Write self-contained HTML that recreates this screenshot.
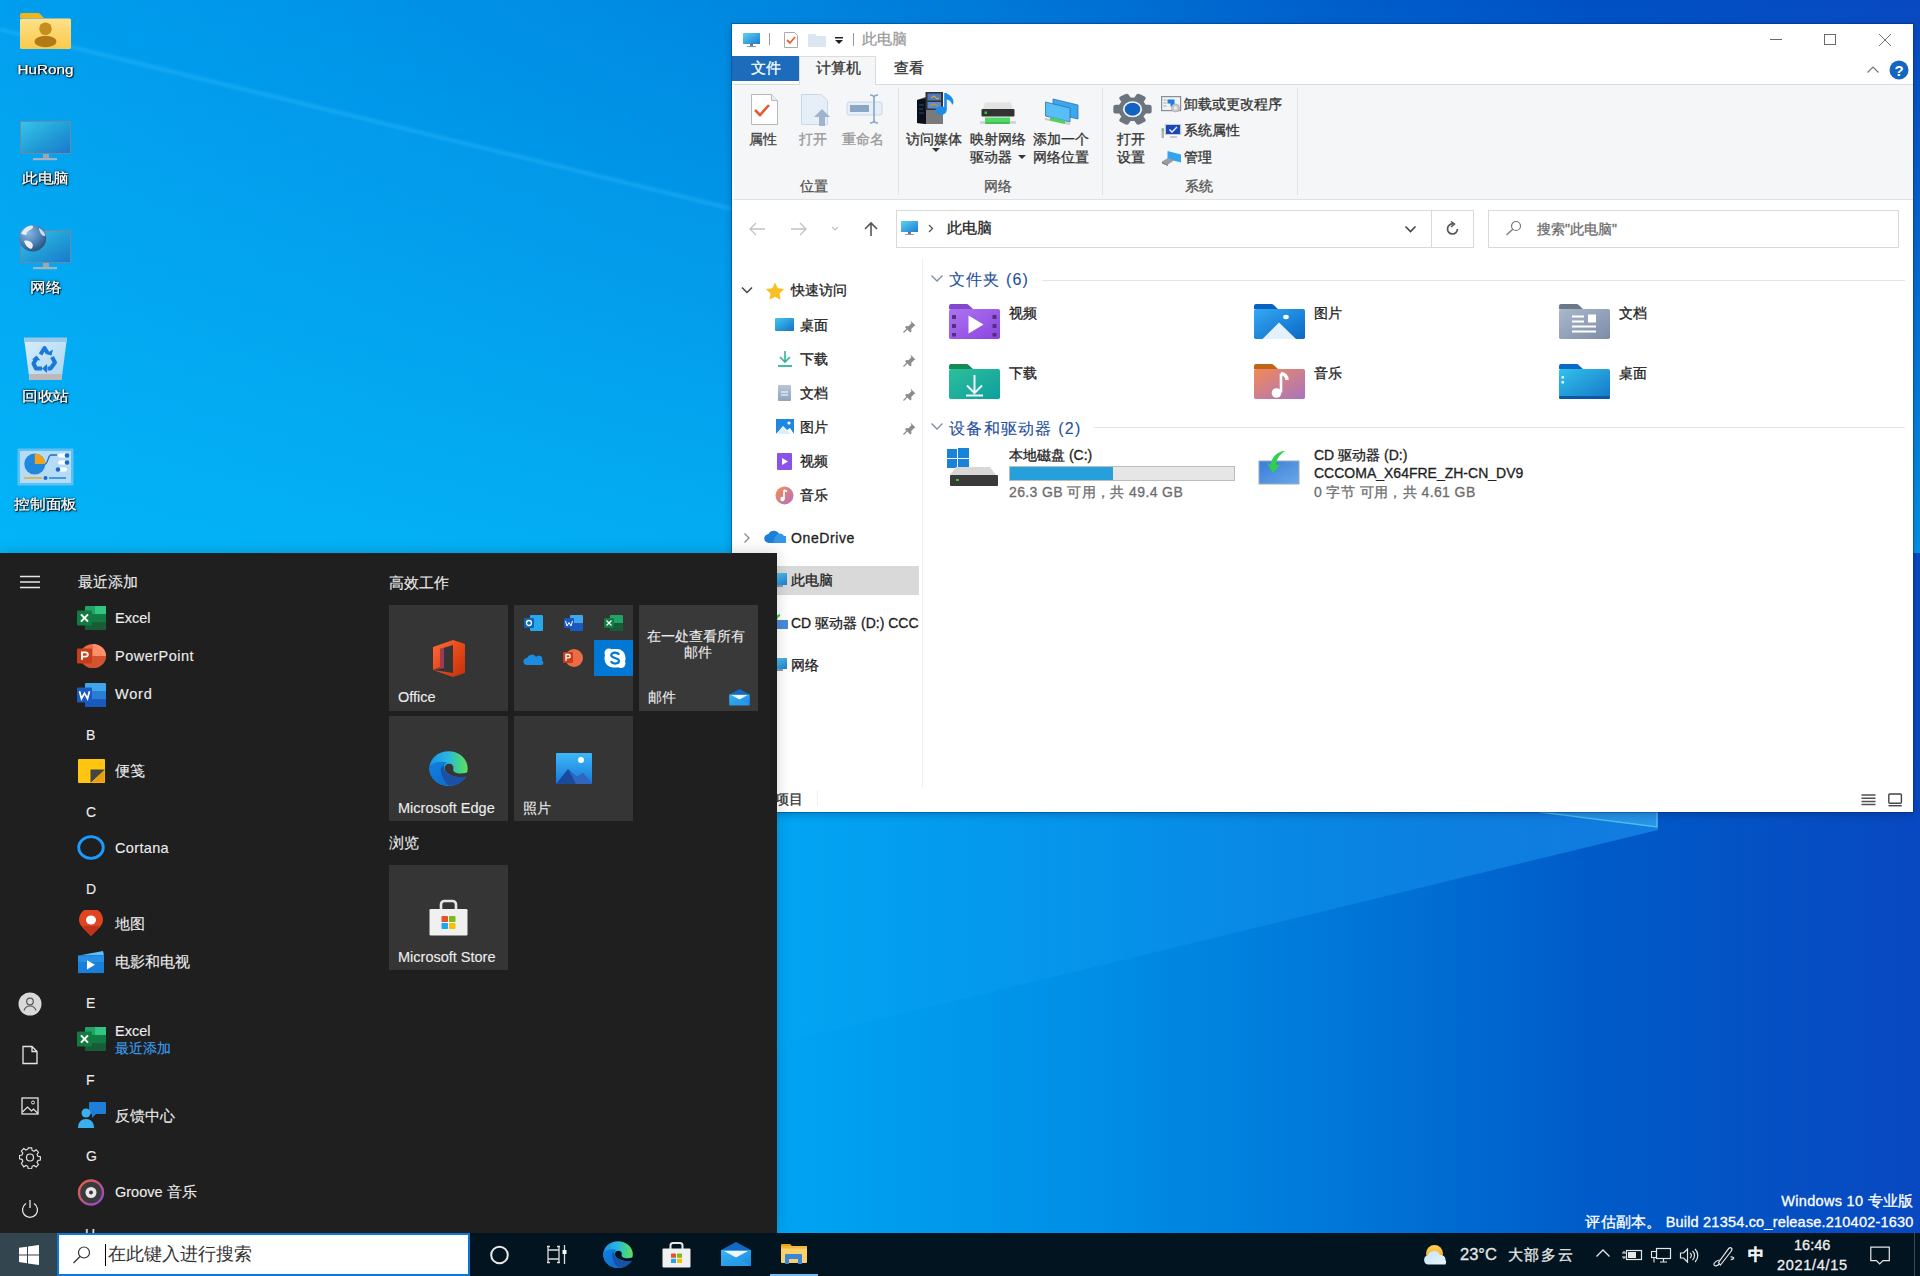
<!DOCTYPE html>
<html><head><meta charset="utf-8">
<style>
*{margin:0;padding:0;box-sizing:border-box}
html,body{width:1920px;height:1276px;overflow:hidden}
body{position:relative;font-family:"Liberation Sans",sans-serif;background:#0a8fe6;}
.a{position:absolute}
.t{position:absolute;white-space:nowrap;line-height:1;-webkit-text-stroke:0.3px currentColor}
svg{display:block}
/* desktop */
.dl{position:absolute;color:#fff;font-size:13.6px;text-shadow:1px 1px 1px #000,0 0 2px #000,0 0 3px rgba(0,0,0,.7);text-align:center;width:91px;left:0;line-height:1;transform:scaleX(1.12);-webkit-text-stroke:0.25px #fff}
/* explorer */
#win{left:732px;top:24px;width:1181px;height:788px;background:#fff;box-shadow:0 0 0 1px rgba(0,40,100,.35),0 2px 8px rgba(0,0,40,.25)}
.gray{color:#222}
/* start */
#start{left:0;top:553px;width:777px;height:680px;background:#1f1f1f;box-shadow:0 0 14px rgba(0,0,0,.18)}
.sm{color:#ededed;font-size:14.5px;-webkit-text-stroke:0.12px currentColor}
.tile{position:absolute;background:#353535}
/* taskbar */
#tb{left:0;top:1233px;width:1920px;height:43px;background:#021420}
</style></head><body>
<!-- WALLPAPER -->
<svg class="a" style="left:0;top:0" width="1920" height="1276" viewBox="0 0 1920 1276">
<defs>
<linearGradient id="gt" gradientUnits="userSpaceOnUse" x1="0" y1="0" x2="1920" y2="0">
<stop offset="0" stop-color="#009eee"/>
<stop offset="0.38" stop-color="#0088e0"/>
<stop offset="0.52" stop-color="#0078d8"/>
<stop offset="0.68" stop-color="#0060cc"/>
<stop offset="0.83" stop-color="#0050c4"/>
<stop offset="1" stop-color="#0848c0"/>
</linearGradient>
<linearGradient id="gtv" gradientUnits="userSpaceOnUse" x1="0" y1="0" x2="0" y2="553">
<stop offset="0" stop-color="#00c0ff" stop-opacity="0"/>
<stop offset="1" stop-color="#00c4ff" stop-opacity="0.6"/>
</linearGradient>
<linearGradient id="gb" gradientUnits="userSpaceOnUse" x1="777" y1="0" x2="1920" y2="0">
<stop offset="0" stop-color="#00a4f2"/>
<stop offset="0.28" stop-color="#008ee6"/>
<stop offset="0.5" stop-color="#0076d8"/>
<stop offset="0.72" stop-color="#005ac8"/>
<stop offset="1" stop-color="#0848c0"/>
</linearGradient>
<linearGradient id="gbeam" gradientUnits="userSpaceOnUse" x1="777" y1="0" x2="1658" y2="0">
<stop offset="0" stop-color="#20b0ff" stop-opacity="0.06"/>
<stop offset="0.6" stop-color="#20a8ff" stop-opacity="0.26"/>
<stop offset="1" stop-color="#28a8ff" stop-opacity="0.46"/>
</linearGradient>
</defs>
<rect x="0" y="0" width="1920" height="553" fill="url(#gt)"/>
<rect x="0" y="0" width="1920" height="553" fill="url(#gtv)"/>
<rect x="0" y="553" width="1920" height="723" fill="url(#gb)"/>
<polygon points="0,1233 1658,830 1658,540 0,540" fill="url(#gbeam)"/>
<polygon points="0,29.4 732,208.6 732,553 0,553" fill="#30c0ff" opacity="0.06"/>
<filter id="blr" x="-10%" y="-10%" width="120%" height="120%"><feGaussianBlur stdDeviation="1.6"/></filter><line x1="0" y1="29.4" x2="732" y2="208.6" stroke="#40c8ff" stroke-width="3.5" opacity="0.35" filter="url(#blr)"/>
<polygon points="1540,811 1657,827 1657,811" fill="#40b0f0" opacity="0.45"/>
<polyline points="1540,812 1657,827 1657,811" fill="none" stroke="#60d0f4" stroke-width="1.4" opacity="0.75"/>
</svg>
<!-- DESKTOP ICONS -->
<div id="desk"></div>
<svg class="a" style="left:20px;top:13px" width="51" height="36" viewBox="0 0 51 36"><defs><linearGradient id="fld" x1="0" y1="0" x2="0" y2="1"><stop offset="0" stop-color="#ffe08a"/><stop offset="1" stop-color="#f9c94a"/></linearGradient></defs><path d="M0 2a2 2 0 0 1 2-2h17l5 5H0z" fill="#f0b51a"/><rect x="0" y="5.5" width="51" height="30.5" rx="1.5" fill="url(#fld)"/><circle cx="25.5" cy="15.8" r="6.3" fill="#c48e1c"/><ellipse cx="25.5" cy="28.5" rx="11" ry="5.8" fill="#b27a16"/></svg>
<div class="dl" style="top:63.3px">HuRong</div>
<svg class="a" style="left:20px;top:121px" width="52" height="40" viewBox="0 0 52 40"><defs><linearGradient id="dmon" x1="0" y1="0" x2="1" y2="1"><stop offset="0" stop-color="#38c4ec"/><stop offset="0.5" stop-color="#22a0d8"/><stop offset="1" stop-color="#1a78cc"/></linearGradient></defs><rect x="0.5" y="0.5" width="50" height="32" fill="url(#dmon)" stroke="#6a8aa8" stroke-width="1"/><rect x="23" y="33" width="6" height="4" fill="#9aa8b4"/><rect x="13" y="37" width="24" height="2.2" fill="#a8b2bc"/></svg>
<div class="dl" style="top:172.3px">此电脑</div>
<svg class="a" style="left:18px;top:224px" width="54" height="46" viewBox="0 0 54 46"><defs><radialGradient id="glb" cx="0.35" cy="0.3" r="0.75"><stop offset="0" stop-color="#8ab8e0"/><stop offset="0.6" stop-color="#4a80b8"/><stop offset="1" stop-color="#2a5078"/></radialGradient></defs><rect x="2.5" y="6.5" width="50" height="32" fill="url(#dmon)" stroke="#6a8aa8" stroke-width="1"/><rect x="25" y="39" width="6" height="4" fill="#9aa8b4"/><rect x="15" y="43" width="24" height="2.2" fill="#a8b2bc"/><ellipse cx="14.6" cy="14.2" rx="13.6" ry="13.2" fill="url(#glb)"/><path d="M3 10c2-5 6-8 11-8.5 2 1 1 3-1 4-3 1.5-5 3-4 5-2 1-4 0-6-.5z" fill="#eef4fa" opacity=".9"/><path d="M6 17c3-1 6 0 8 2 1.5 2 1 4.5-1 6-3-1-6-4-7-8z" fill="#f4f8fc" opacity=".95"/><path d="M21 4c3 1.5 5.5 4 6.5 7.5-1.5 1-3.5 0-4.5-1.5-1-2-2-3.5-2-6z" fill="#dde8f4" opacity=".9"/></svg>
<div class="dl" style="top:281.3px">网络</div>
<svg class="a" style="left:23px;top:335px" width="45" height="46" viewBox="0 0 45 46"><defs><linearGradient id="bin" x1="0" y1="0" x2="1" y2="1"><stop offset="0" stop-color="#d8eefc"/><stop offset="1" stop-color="#a8d4f2"/></linearGradient></defs><path d="M1 3h43l-5.5 42H6.5z" fill="url(#bin)"/><path d="M1 2.5h43l-.6 4.5H1.6z" fill="#9cc8e8"/><path d="M6 39h33l-.8 6H6.8z" fill="#c0b8b8"/><g fill="none" stroke="#1a78d6" stroke-width="4" stroke-linejoin="round"><path d="M17.5 19.5l4-6.5 3 5"/><path d="M29 22l3 5.5-4.5 6h-3"/><path d="M19 33.5h-6l-2.5-5 3-5"/></g><g fill="#1a78d6"><path d="M22.5 19l6 1.5 1.5-6z"/><path d="M24 29v9l-5-4.5z"/><path d="M9 24.5l4.5-4 4 5z"/></g></svg>
<div class="dl" style="top:389.8px">回收站</div>
<svg class="a" style="left:17px;top:448px" width="57" height="38" viewBox="0 0 57 38"><rect x="0.5" y="0.5" width="56" height="37" rx="1" fill="#5cc0f4"/><rect x="3" y="3" width="51" height="32" fill="#b4dcf6"/><circle cx="17.8" cy="16" r="10.5" fill="#1f88dc"/><path d="M17.8 5.5a10.5 10.5 0 0 1 10.5 10.5H17.8z" fill="#f0a21a"/><path d="M28 16c3 0 3-9 6-9h6" fill="none" stroke="#2a6ab8" stroke-width="1.3"/><rect x="41" y="5.5" width="9" height="4" rx="2" fill="#fff"/><circle cx="50" cy="7.5" r="2.3" fill="#1a6ad0"/><rect x="41" y="12.5" width="9" height="4" rx="2" fill="#fff"/><circle cx="50" cy="14.5" r="2.3" fill="#1a6ad0"/><rect x="41" y="19.5" width="9" height="4" rx="2" fill="#fff"/><circle cx="41" cy="21.5" r="2.3" fill="#1a6ad0"/><path d="M7 30h18" stroke="#e8b040" stroke-width="1.8"/><circle cx="28.5" cy="30" r="2" fill="#1a6ad0"/><path d="M32 30h17" stroke="#2a88e0" stroke-width="1.6"/></svg>
<div class="dl" style="top:498.3px">控制面板</div>


<!-- EXPLORER WINDOW -->
<div id="win" class="a"></div>
<!-- title bar -->
<svg class="a" style="left:742px;top:32px" width="20" height="16" viewBox="0 0 20 16"><defs><linearGradient id="mon" x1="0" y1="0" x2="1" y2="1"><stop offset="0" stop-color="#5fd0f2"/><stop offset="1" stop-color="#1a7fd0"/></linearGradient></defs><rect x="1" y="1" width="17" height="11" fill="url(#mon)"/><rect x="8" y="12" width="3" height="2" fill="#6a7a8a"/><rect x="5" y="14" width="9" height="1" fill="#8a9aaa"/></svg>
<div class="a" style="left:769px;top:33px;width:1px;height:12px;background:#9a9a9a"></div>
<svg class="a" style="left:783px;top:31px" width="16" height="18" viewBox="0 0 16 18"><path d="M1.5 1.5h10l3 3v12h-13z" fill="#fff" stroke="#aaa"/><path d="M4 9l3 3 5-6" fill="none" stroke="#e8603a" stroke-width="1.8"/></svg>
<svg class="a" style="left:807px;top:33px" width="20" height="14" viewBox="0 0 20 14"><path d="M1 1h7l2 2h9v11H1z" fill="#dbe6f2"/></svg>
<svg class="a" style="left:834px;top:36px" width="10" height="9" viewBox="0 0 10 9"><rect x="1" y="1" width="8" height="1.5" fill="#222"/><path d="M1 4h8l-4 4z" fill="#222"/></svg>
<div class="a" style="left:853px;top:33px;width:1px;height:13px;background:#9a9a9a"></div>
<div class="t" style="left:862px;top:32px;font-size:14.5px;color:#9a9a9a">此电脑</div>
<!-- window buttons -->
<div class="a" style="left:1770px;top:39px;width:12px;height:1px;background:#6a6a6a"></div>
<div class="a" style="left:1824px;top:34px;width:12px;height:11px;border:1px solid #6a6a6a"></div>
<svg class="a" style="left:1878px;top:33px" width="14" height="14" viewBox="0 0 14 14"><path d="M1 1L13 13M13 1L1 13" stroke="#707070" stroke-width="1"/></svg>
<!-- tabs -->
<div class="a" style="left:732px;top:56px;width:67px;height:25px;background:#1c6cbb"></div>
<div class="t" style="left:751px;top:61px;font-size:14.5px;color:#fff">文件</div>
<div class="a" style="left:799px;top:56px;width:77px;height:29px;background:#f5f6f7;border:1px solid #dadbdc;border-bottom:none"></div>
<div class="t" style="left:816px;top:61px;font-size:14.5px;color:#333">计算机</div>
<div class="t" style="left:894px;top:61px;font-size:14.5px;color:#333">查看</div>
<svg class="a" style="left:1866px;top:65px" width="14" height="9" viewBox="0 0 14 9"><path d="M1.5 7.5L7 2l5.5 5.5" fill="none" stroke="#777" stroke-width="1.2"/></svg>
<svg class="a" style="left:1888px;top:60px" width="22" height="20" viewBox="0 0 22 20"><circle cx="11" cy="10" r="9.5" fill="#1466c0"/><text x="11" y="15.5" font-size="15" font-weight="bold" text-anchor="middle" fill="#fff" font-family="Liberation Sans">?</text></svg>
<!-- ribbon -->
<div class="a" style="left:732px;top:84px;width:1181px;height:116px;background:#f5f6f7;border-top:1px solid #dadbdc;border-bottom:1px solid #e0e1e2;border-left:2px solid #fbfbfb"></div>
<div class="a" style="left:800px;top:84px;width:75px;height:1px;background:#f5f6f7"></div>
<div class="a" style="left:898px;top:88px;width:1px;height:107px;background:#e2e3e4"></div>
<div class="a" style="left:1102px;top:88px;width:1px;height:107px;background:#e2e3e4"></div>
<div class="a" style="left:1297px;top:88px;width:1px;height:107px;background:#e2e3e4"></div>
<!-- 属性 -->
<svg class="a" style="left:750px;top:93px" width="30" height="34" viewBox="0 0 30 34"><path d="M1.5 1.5h20l6 6v24h-26z" fill="#fff" stroke="#b8b8b8"/><path d="M21.5 1.5v6h6" fill="#eee" stroke="#b8b8b8"/><path d="M5 17l5 5 9-10" fill="none" stroke="#e55b2d" stroke-width="2.6"/></svg>
<svg class="a" style="left:800px;top:93px" width="36" height="34" viewBox="0 0 36 34"><path d="M1.5 1.5h20l6 6v24h-26z" fill="#e6eff8" stroke="#c8d8e8"/><path d="M14 24l8-8 8 8h-5v9h-6v-9z" fill="#9db4cc"/></svg>
<svg class="a" style="left:846px;top:93px" width="38" height="32" viewBox="0 0 38 32"><rect x="1" y="9" width="35" height="13" rx="2" fill="#e6eff8" stroke="#c8d8e8"/><rect x="4" y="12" width="19" height="7" fill="#8aa6c4"/><path d="M24 2c2 0 4 1 4 3v22c0 2 2 3 4 3M32 2c-2 0-4 1-4 3M24 30c2 0 4-1 4-3" fill="none" stroke="#8aa6c4" stroke-width="1.6"/></svg>
<div class="t" style="left:749px;top:132px;font-size:14px;color:#444">属性</div>
<div class="t" style="left:799px;top:132px;font-size:14px;color:#999">打开</div>
<div class="t" style="left:842px;top:132px;font-size:14px;color:#999">重命名</div>
<div class="t" style="left:800px;top:179px;font-size:14px;color:#555">位置</div>
<!-- 网络 group -->
<svg class="a" style="left:915px;top:91px" width="42" height="36" viewBox="0 0 42 36"><path d="M2 9l8-3h18v27H10l-8-1z" fill="#7a7a7a"/><path d="M2 9l9-2v26l-9-1z" fill="#0a0f1a"/><path d="M4 14h5M4 18h4M4 22h5" stroke="#2a5a9a" stroke-width=".8"/><rect x="10.5" y="1" width="17.5" height="18" fill="#333"/><rect x="12.5" y="2.5" width="13.5" height="7" fill="#4a7ac0"/><rect x="12.5" y="11" width="13.5" height="6.5" fill="#5a8ad0"/><path d="M16 7l3-2 3 3 2-1" fill="none" stroke="#e8a030" stroke-width="1.3"/><path d="M15 15l4-2 4 2" fill="none" stroke="#d89030" stroke-width="1.2"/><path d="M30.5 2v17" stroke="#1c8ce8" stroke-width="2.6"/><ellipse cx="26" cy="19.5" rx="5.6" ry="4.3" fill="#1c8ce8"/><path d="M30.5 2c4 1.5 8 4.5 8 9 0 1-.5 2-1.5 3 0-3-2.5-5-6.5-6" fill="#1c8ce8"/></svg>
<svg class="a" style="left:979px;top:100px" width="38" height="26" viewBox="0 0 38 26"><path d="M4 9l2-6.5h26l2 6.5z" fill="#e2e2e2"/><rect x="2.5" y="9" width="33" height="7.5" rx="1" fill="#333"/><rect x="5.5" y="11.5" width="2.5" height="2.5" fill="#3c3"/><path d="M1 22.5h36" stroke="#d0d0d0" stroke-width="2.5"/><rect x="6" y="17.5" width="25" height="6.5" fill="#52d866"/><path d="M7 23h23" stroke="#2a9a3a" stroke-width=".8"/></svg>
<svg class="a" style="left:1043px;top:97px" width="38" height="30" viewBox="0 0 38 30"><path d="M10 2l25 6v14l-25-6z" fill="#3aa8f0" stroke="#3070b0" stroke-width=".8"/><path d="M2.5 5l24.5 6v14L2.5 19z" fill="#58bef8" stroke="#3070b0" stroke-width=".8"/><path d="M2 22l25 5" stroke="#c8c8c8" stroke-width="2"/><path d="M7 20l15 3.5v3.5L7 23.5z" fill="#50d060"/></svg>
<div class="t" style="left:906px;top:132px;font-size:14px;color:#333">访问媒体</div>
<svg class="a" style="left:932px;top:148px" width="8" height="5" viewBox="0 0 8 5"><path d="M0 0h8l-4 4z" fill="#333"/></svg>
<div class="t" style="left:970px;top:132px;font-size:14px;color:#333">映射网络</div>
<div class="t" style="left:970px;top:150px;font-size:14px;color:#333">驱动器</div>
<svg class="a" style="left:1018px;top:155px" width="8" height="5" viewBox="0 0 8 5"><path d="M0 0h8l-4 4z" fill="#333"/></svg>
<div class="t" style="left:1033px;top:132px;font-size:14px;color:#333">添加一个</div>
<div class="t" style="left:1033px;top:150px;font-size:14px;color:#333">网络位置</div>
<div class="t" style="left:984px;top:179px;font-size:14px;color:#555">网络</div>
<!-- 系统 group -->
<svg class="a" style="left:1113px;top:93px" width="39" height="33" viewBox="0 0 39 33"><g transform="translate(19.5 16.2) scale(1.14 0.96)" fill="#6c7480"><rect x="-4.6" y="-16.8" width="9.2" height="9" rx="2.4" transform="rotate(30)"/><rect x="-4.6" y="-16.8" width="9.2" height="9" rx="2.4" transform="rotate(90)"/><rect x="-4.6" y="-16.8" width="9.2" height="9" rx="2.4" transform="rotate(150)"/><rect x="-4.6" y="-16.8" width="9.2" height="9" rx="2.4" transform="rotate(210)"/><rect x="-4.6" y="-16.8" width="9.2" height="9" rx="2.4" transform="rotate(270)"/><rect x="-4.6" y="-16.8" width="9.2" height="9" rx="2.4" transform="rotate(330)"/><circle r="12.3"/><circle r="8.4" fill="#f4f5f6"/><circle r="6.8" fill="#1262c2"/></g></svg>
<div class="t" style="left:1117px;top:132px;font-size:14px;color:#333">打开</div>
<div class="t" style="left:1117px;top:150px;font-size:14px;color:#333">设置</div>
<svg class="a" style="left:1161px;top:96px" width="21" height="17" viewBox="0 0 21 17"><rect x="0.6" y="0.6" width="19" height="14" fill="#f0f2f4" stroke="#8a8e94" stroke-width="1.2"/><path d="M2.5 4h3M2.5 7h3M2.5 10h3" stroke="#a0a4aa" stroke-width="1"/><path d="M6.5 3.5h7v7h-4v-3h-3z" fill="#1c7ee0"/><circle cx="14.5" cy="12" r="4" fill="#c8cacc" stroke="#a8aaac" stroke-width=".8"/><circle cx="14.5" cy="12" r="1.5" fill="#f0f2f4"/></svg>
<svg class="a" style="left:1161px;top:123px" width="21" height="16" viewBox="0 0 21 16"><rect x="3.8" y="1" width="16.5" height="11" fill="#c8ccd0"/><rect x="5" y="2" width="14" height="9" fill="#1a48b8"/><path d="M8.5 6.5l2.5 2.5 5-5" fill="none" stroke="#f0f4ff" stroke-width="1.4"/><path d="M9 14h7" stroke="#aab" stroke-width="1.2"/><rect x="0.5" y="5" width="2.5" height="10" fill="#b0b4b8"/><rect x="1" y="6.5" width="1.5" height="1.5" fill="#3c3"/></svg>
<svg class="a" style="left:1161px;top:150px" width="21" height="16" viewBox="0 0 21 16"><path d="M6.5 1l13.5 3.5v8L6.5 9z" fill="#34a4ee"/><path d="M1 11.5l6-3.5 6 2.5-6 4z" fill="#9a9ea4"/><path d="M1 11.5v2l6 2.5v-1.5z" fill="#7a7e84"/></svg>
<div class="t" style="left:1184px;top:97px;font-size:14px;color:#333">卸载或更改程序</div>
<div class="t" style="left:1184px;top:123px;font-size:14px;color:#333">系统属性</div>
<div class="t" style="left:1184px;top:150px;font-size:14px;color:#333">管理</div>
<div class="t" style="left:1185px;top:179px;font-size:14px;color:#555">系统</div>
<!-- address row -->
<svg class="a" style="left:748px;top:221px" width="140" height="16" viewBox="0 0 140 16"><path d="M2 8h15M8 2L2 8l6 6" fill="none" stroke="#c2c2c2" stroke-width="1.3"/><path d="M43 8h15M52 2l6 6-6 6" fill="none" stroke="#c2c2c2" stroke-width="1.3"/><path d="M84 6l3 3 3-3" fill="none" stroke="#c2c2c2" stroke-width="1.1"/><path d="M123 15V2M117 8l6-6 6 6" fill="none" stroke="#555" stroke-width="1.6"/></svg>
<div class="a" style="left:896px;top:210px;width:578px;height:38px;border:1px solid #d9d9d9"></div>
<div class="a" style="left:1431px;top:211px;width:1px;height:36px;background:#d9d9d9"></div>
<svg class="a" style="left:900px;top:220px" width="20" height="16" viewBox="0 0 20 16"><rect x="1" y="1" width="17" height="11" fill="url(#mon)"/><rect x="8" y="12" width="3" height="2" fill="#6a7a8a"/><rect x="5" y="14" width="9" height="1" fill="#8a9aaa"/></svg>
<svg class="a" style="left:928px;top:224px" width="6" height="9" viewBox="0 0 6 9"><path d="M1 1l3.5 3.5L1 8" fill="none" stroke="#555" stroke-width="1.3"/></svg>
<div class="t" style="left:947px;top:221px;font-size:14.5px;color:#222">此电脑</div>
<svg class="a" style="left:1404px;top:225px" width="13" height="8" viewBox="0 0 13 8"><path d="M1.5 1.5l5 5 5-5" fill="none" stroke="#444" stroke-width="1.6"/></svg>
<svg class="a" style="left:1445px;top:221px" width="16" height="16" viewBox="0 0 16 16"><path d="M12.5 8A5 5 0 1 1 8 3" fill="none" stroke="#555" stroke-width="1.7"/><path d="M6 0.5l3.5 2.5L6 6" fill="none" stroke="#555" stroke-width="1.5"/></svg>
<div class="a" style="left:1488px;top:210px;width:411px;height:38px;border:1px solid #d9d9d9"></div>
<svg class="a" style="left:1505px;top:220px" width="17" height="16" viewBox="0 0 17 16"><circle cx="11" cy="6" r="4.5" fill="none" stroke="#777" stroke-width="1.2"/><path d="M8 9L1.5 15" stroke="#777" stroke-width="1.3"/></svg>
<div class="t" style="left:1537px;top:222px;font-size:14px;color:#6d6d6d">搜索"此电脑"</div>


<!-- nav pane -->
<div class="a" style="left:922px;top:258px;width:1px;height:530px;background:#f0f0f0"></div>
<svg class="a" style="left:741px;top:286px" width="12" height="8" viewBox="0 0 12 8"><path d="M1 1.5l5 5 5-5" fill="none" stroke="#444" stroke-width="1.5"/></svg>
<svg class="a" style="left:765px;top:282px" width="20" height="18" viewBox="0 0 20 18"><path d="M10 0.5l2.8 5.8 6.4.8-4.7 4.4 1.2 6.3L10 14.7l-5.7 3.1 1.2-6.3L.8 7.1l6.4-.8z" fill="#f8c021"/></svg>
<div class="t" style="left:791px;top:283px;font-size:14px;color:#222">快速访问</div>
<!-- qa items -->
<svg class="a" style="left:775px;top:318px" width="20" height="14" viewBox="0 0 20 14"><defs><linearGradient id="dsk" x1="0" y1="0" x2="1" y2="1"><stop offset="0" stop-color="#43c6f0"/><stop offset="1" stop-color="#1372c8"/></linearGradient></defs><rect x="0" y="0" width="19" height="13" rx="1" fill="url(#dsk)"/></svg>
<div class="t" style="left:800px;top:318px;font-size:14px;color:#222">桌面</div>
<svg class="a" style="left:777px;top:350px" width="16" height="18" viewBox="0 0 16 18"><path d="M8 1v11M3 7l5 5 5-5" fill="none" stroke="#2fb59a" stroke-width="1.6"/><path d="M1 16h14" stroke="#2fb59a" stroke-width="1.8"/></svg>
<div class="t" style="left:800px;top:352px;font-size:14px;color:#222">下载</div>
<svg class="a" style="left:777px;top:385px" width="16" height="17" viewBox="0 0 16 17"><defs><linearGradient id="doc" x1="0" y1="0" x2="0" y2="1"><stop offset="0" stop-color="#b8c6d8"/><stop offset="1" stop-color="#8fa3be"/></linearGradient></defs><rect x="1" y="0" width="13" height="16" rx="1" fill="url(#doc)"/><path d="M4 7h7M4 10h7" stroke="#fff" stroke-width="1"/></svg>
<div class="t" style="left:800px;top:386px;font-size:14px;color:#222">文档</div>
<svg class="a" style="left:776px;top:419px" width="18" height="16" viewBox="0 0 18 16"><rect x="0" y="0" width="18" height="15" fill="#1e88e0"/><path d="M0 15L7 7l4 4 3-2 4 6z" fill="#fff"/><path d="M0 15L7 8l8 7z" fill="#dbeeff"/><circle cx="13" cy="4" r="1.6" fill="#fff"/></svg>
<div class="t" style="left:800px;top:420px;font-size:14px;color:#222">图片</div>
<svg class="a" style="left:777px;top:453px" width="15" height="17" viewBox="0 0 15 17"><rect x="0" y="0" width="15" height="17" rx="1" fill="#8b52e8"/><path d="M5 5v7l6-3.5z" fill="#fff"/></svg>
<div class="t" style="left:800px;top:454px;font-size:14px;color:#222">视频</div>
<svg class="a" style="left:775px;top:486px" width="19" height="19" viewBox="0 0 19 19"><defs><linearGradient id="mus" x1="0" y1="0" x2="1" y2="1"><stop offset="0" stop-color="#f6924a"/><stop offset="1" stop-color="#b46cc8"/></linearGradient></defs><circle cx="9.5" cy="9.5" r="9" fill="url(#mus)"/><path d="M9 4v9" stroke="#fff" stroke-width="1.6"/><circle cx="7.5" cy="13" r="2.2" fill="#fff"/><path d="M9 4l3 1.5" stroke="#fff" stroke-width="1.6"/></svg>
<div class="t" style="left:800px;top:488px;font-size:14px;color:#222">音乐</div>
<svg class="a" style="left:902px;top:318px" width="16" height="120" viewBox="0 0 16 120">
<g id="pin"><path d="M8.5 2.5l5 5-1.3.6-3 3 .3 2.2-1.2 1.2-5.3-5.3 1.2-1.2 2.2.3 3-3z" fill="#8c8c8c"/><path d="M5 11L1.5 14.5" stroke="#8c8c8c" stroke-width="1.3"/></g>
<use href="#pin" y="34"/><use href="#pin" y="68"/><use href="#pin" y="102"/>
</svg>
<svg class="a" style="left:743px;top:532px" width="8" height="12" viewBox="0 0 8 12"><path d="M1.5 1.5l4.5 4.5-4.5 4.5" fill="none" stroke="#888" stroke-width="1.3"/></svg>
<svg class="a" style="left:764px;top:529px" width="22" height="15" viewBox="0 0 22 15"><path d="M5 14a4.5 4.5 0 0 1-.5-9 6 6 0 0 1 11 1 4 4 0 0 1 1.5 8z" fill="#1f7fd8"/><path d="M9 14h12a3.5 3.5 0 0 0-1-7 5 5 0 0 0-9 1z" fill="#3397e8"/></svg>
<div class="t" style="left:791px;top:531px;font-size:14px;color:#222;letter-spacing:0.6px">OneDrive</div>
<div class="a" style="left:732px;top:566px;width:187px;height:29px;background:#d9d9d9"></div>
<svg class="a" style="left:771px;top:573px" width="20" height="16" viewBox="0 0 20 16"><rect x="1" y="0" width="15" height="12" fill="url(#mon)"/><rect x="5" y="12" width="7" height="2" fill="#8a9aaa"/></svg>
<div class="t" style="left:791px;top:573px;font-size:14px;color:#222">此电脑</div>
<div class="a" style="left:732px;top:608px;width:187px;height:30px;overflow:hidden"><div class="t" style="left:59px;top:8px;font-size:14px;color:#222">CD 驱动器 (D:) CCCOMA_X64FRE_ZH-CN_DV9</div></div>
<svg class="a" style="left:771px;top:657px" width="20" height="16" viewBox="0 0 20 16"><rect x="1" y="1" width="15" height="11" fill="url(#mon)"/><rect x="5" y="12" width="7" height="2" fill="#8a9aaa"/></svg>
<svg class="a" style="left:772px;top:614px" width="18" height="16" viewBox="0 0 18 16"><rect x="1" y="6" width="15" height="9" fill="#4a8ad8"/><path d="M8 1c-3 1-4 3-4 6" stroke="#3c3" stroke-width="2" fill="none"/></svg>
<div class="t" style="left:791px;top:658px;font-size:14px;color:#222">网络</div>
<!-- content -->
<svg class="a" style="left:930px;top:274px" width="14" height="9" viewBox="0 0 14 9"><path d="M1.5 1.5l5.5 5.5 5.5-5.5" fill="none" stroke="#7a8fa8" stroke-width="1.3"/></svg>
<div class="t" style="left:949px;top:272px;font-size:16px;color:#1f4f9f;letter-spacing:1.15px;-webkit-text-stroke:0.1px currentColor">文件夹 (6)</div>
<div class="a" style="left:1042px;top:280px;width:863px;height:1px;background:#e5e5e5"></div>
<svg class="a" style="left:930px;top:422px" width="14" height="9" viewBox="0 0 14 9"><path d="M1.5 1.5l5.5 5.5 5.5-5.5" fill="none" stroke="#7a8fa8" stroke-width="1.3"/></svg>
<div class="t" style="left:949px;top:420.5px;font-size:16px;color:#1f4f9f;letter-spacing:1.25px;-webkit-text-stroke:0.1px currentColor">设备和驱动器 (2)</div>
<div class="a" style="left:1094px;top:427px;width:811px;height:1px;background:#e5e5e5"></div>
<!-- folder icons -->
<svg class="a" style="left:949px;top:304px" width="51" height="35" viewBox="0 0 51 35"><defs><linearGradient id="fv" x1="0" y1="0" x2="1" y2="1"><stop offset="0" stop-color="#ad74f2"/><stop offset="1" stop-color="#8a44de"/></linearGradient></defs><path d="M0 2a2 2 0 0 1 2-2h15.5c1 0 1.6.3 2.2.9L24 5H0z" fill="#8448cc"/><rect x="0" y="5" width="51" height="30" rx="1.8" fill="url(#fv)"/><g fill="#50307a"><rect x="3" y="11" width="4" height="4" rx=".5"/><rect x="3" y="20" width="4" height="4" rx=".5"/><rect x="3" y="29" width="4" height="3.5" rx=".5"/><rect x="43.5" y="11" width="4" height="4" rx=".5"/><rect x="43.5" y="20" width="4" height="4" rx=".5"/><rect x="43.5" y="29" width="4" height="3.5" rx=".5"/></g><path d="M19.5 11.5v18l15-9z" fill="#fff"/></svg>
<div class="t" style="left:1009px;top:306px;font-size:14px;color:#222">视频</div>
<svg class="a" style="left:949px;top:364px" width="51" height="35" viewBox="0 0 51 35"><defs><linearGradient id="fd" x1="0" y1="0" x2="1" y2="1"><stop offset="0" stop-color="#2cc09a"/><stop offset="1" stop-color="#0e9e9e"/></linearGradient></defs><path d="M0 2a2 2 0 0 1 2-2h15.5c1 0 1.6.3 2.2.9L24 5H0z" fill="#178a58"/><rect x="0" y="5" width="51" height="30" rx="1.8" fill="url(#fd)"/><path d="M25.5 11v17M18 21.5l7.5 7.5 7.5-7.5M17 31.5h17" fill="none" stroke="#f2f6ff" stroke-width="2"/></svg>
<div class="t" style="left:1009px;top:366px;font-size:14px;color:#222">下载</div>
<svg class="a" style="left:1254px;top:304px" width="51" height="35" viewBox="0 0 51 35"><defs><linearGradient id="fp" x1="0" y1="0" x2="1" y2="1"><stop offset="0" stop-color="#34a8f4"/><stop offset="1" stop-color="#0a68c4"/></linearGradient></defs><path d="M0 2a2 2 0 0 1 2-2h15.5c1 0 1.6.3 2.2.9L24 5H0z" fill="#0a62c0"/><rect x="0" y="5" width="51" height="30" rx="1.8" fill="url(#fp)"/><path d="M8.5 35l16.5-16.5L42 35z" fill="#e4f0fa"/><ellipse cx="32" cy="13" rx="2.8" ry="2.2" fill="#fff"/></svg>
<div class="t" style="left:1314px;top:306px;font-size:14px;color:#222">图片</div>
<svg class="a" style="left:1254px;top:364px" width="51" height="35" viewBox="0 0 51 35"><defs><linearGradient id="fm" x1="0" y1="0" x2="1" y2="1"><stop offset="0" stop-color="#f28a58"/><stop offset="1" stop-color="#a874c0"/></linearGradient></defs><path d="M0 2a2 2 0 0 1 2-2h15.5c1 0 1.6.3 2.2.9L24 5H0z" fill="#c06418"/><rect x="0" y="5" width="51" height="30" rx="1.8" fill="url(#fm)"/><path d="M27 9.5v19" stroke="#fff" stroke-width="2.6"/><circle cx="22.5" cy="29" r="4.8" fill="#fff"/><path d="M27 9.5c3 .5 6 2.5 6 6.5" fill="none" stroke="#fff" stroke-width="3.4"/></svg>
<div class="t" style="left:1314px;top:366px;font-size:14px;color:#222">音乐</div>
<svg class="a" style="left:1559px;top:304px" width="51" height="35" viewBox="0 0 51 35"><defs><linearGradient id="fo" x1="0" y1="0" x2="1" y2="1"><stop offset="0" stop-color="#aab8cc"/><stop offset="1" stop-color="#7c8ca8"/></linearGradient></defs><path d="M0 2a2 2 0 0 1 2-2h15.5c1 0 1.6.3 2.2.9L24 5H0z" fill="#6b7888"/><rect x="0" y="5" width="51" height="30" rx="1.8" fill="url(#fo)"/><path d="M13 12.5h12M13 17.5h12M13 22.5h24M13 27.5h24" stroke="#fff" stroke-width="2"/><rect x="29" y="10.5" width="8" height="8" fill="#fff"/></svg>
<div class="t" style="left:1619px;top:306px;font-size:14px;color:#222">文档</div>
<svg class="a" style="left:1559px;top:364px" width="51" height="35" viewBox="0 0 51 35"><defs><linearGradient id="fk" x1="0" y1="0" x2="1" y2="1"><stop offset="0" stop-color="#32c2ea"/><stop offset="1" stop-color="#1476c8"/></linearGradient></defs><path d="M0 2a2 2 0 0 1 2-2h15.5c1 0 1.6.3 2.2.9L24 5H0z" fill="#0a6ac8"/><rect x="0" y="5" width="51" height="30" rx="1.8" fill="url(#fk)"/><rect x="0" y="32" width="51" height="3" rx="1.5" fill="#0c58a8"/><rect x="2.5" y="12" width="2.5" height="2.5" fill="#e8f4ff"/><rect x="2.5" y="17" width="2.5" height="2.5" fill="#e8f4ff"/></svg>
<div class="t" style="left:1619px;top:366px;font-size:14px;color:#222">桌面</div>
<!-- drives -->
<svg class="a" style="left:946px;top:447px" width="54" height="40" viewBox="0 0 54 40"><g fill="#1883d7"><rect x="1" y="2" width="10" height="9"/><rect x="12" y="1" width="11" height="10"/><rect x="1" y="12" width="10" height="9"/><rect x="12" y="12" width="11" height="10"/></g><path d="M4 28l6-8h34l6 8z" fill="#d8d8d8"/><rect x="4" y="28" width="48" height="11" rx="1" fill="#3a3a3a"/><rect x="10" y="32" width="3" height="2" fill="#3c3"/></svg>
<div class="t" style="left:1009px;top:448px;font-size:14px;color:#222">本地磁盘 (C:)</div>
<div class="a" style="left:1009px;top:466px;width:226px;height:15px;background:#e6e6e6;border:1px solid #bcbcbc"></div>
<div class="a" style="left:1010px;top:467px;width:103px;height:13px;background:#26a0da"></div>
<div class="t" style="left:1009px;top:485px;font-size:14px;color:#6d6d6d;letter-spacing:0.38px">26.3 GB 可用，共 49.4 GB</div>
<svg class="a" style="left:1257px;top:449px" width="44" height="37" viewBox="0 0 44 37"><defs><linearGradient id="cd" x1="0" y1="0" x2="1" y2="1"><stop offset="0" stop-color="#3a7cd8"/><stop offset="1" stop-color="#6aa8e8"/></linearGradient></defs><rect x="2" y="12" width="40" height="23" fill="url(#cd)" stroke="#9ab"/><path d="M26 2c-8 2-12 8-12 14l-4-2 6 10 7-8-4 0c0-5 3-10 9-14z" fill="#32d04a"/></svg>
<div class="t" style="left:1314px;top:448px;font-size:14px;color:#222">CD 驱动器 (D:)</div>
<div class="t" style="left:1314px;top:466px;font-size:14px;color:#222">CCCOMA_X64FRE_ZH-CN_DV9</div>
<div class="t" style="left:1314px;top:485px;font-size:14px;color:#6d6d6d;letter-spacing:0.4px">0 字节 可用，共 4.61 GB</div>
<!-- status bar -->
<div class="t" style="left:749px;top:792px;font-size:14px;color:#333">6 个项目</div>
<div class="a" style="left:817px;top:790px;width:1px;height:16px;background:#f0f0f0"></div>
<svg class="a" style="left:1858px;top:791px" width="45" height="16" viewBox="0 0 45 16"><path d="M3.5 4h14M3.5 7.2h14M3.5 10.4h14M3.5 13.6h14" stroke="#505050" stroke-width="1.5"/><rect x="30.8" y="3" width="12.6" height="9.3" rx="1" fill="none" stroke="#444" stroke-width="1.4"/><path d="M30.5 14.7h13.2" stroke="#444" stroke-width="1.4"/></svg>

<!-- START MENU -->
<div id="start" class="a"></div>
<!-- left rail -->
<svg class="a" style="left:19px;top:574px" width="22" height="16" viewBox="0 0 22 16"><path d="M1 2.5h20M1 8h20M1 13.5h20" stroke="#e6e6e6" stroke-width="1.3"/></svg>
<svg class="a" style="left:18px;top:992px" width="24" height="24" viewBox="0 0 24 24"><circle cx="12" cy="12" r="11.5" fill="#d9d9d9"/><circle cx="12" cy="9.5" r="3.3" fill="none" stroke="#555" stroke-width="1.2"/><path d="M6 18.5c1-3 3.5-4.5 6-4.5s5 1.5 6 4.5" fill="none" stroke="#555" stroke-width="1.2"/></svg>
<svg class="a" style="left:21px;top:1045px" width="18" height="20" viewBox="0 0 18 20"><path d="M2 1.5h9l5 5v12H2z M11 1.5v5h5" fill="none" stroke="#e6e6e6" stroke-width="1.3"/></svg>
<svg class="a" style="left:21px;top:1097px" width="18" height="18" viewBox="0 0 18 18"><rect x="1" y="1" width="16" height="16" fill="none" stroke="#e6e6e6" stroke-width="1.3"/><path d="M1.5 15l5-5 4 4 2-2 4.5 4.5" fill="none" stroke="#e6e6e6" stroke-width="1.2"/><circle cx="12" cy="5.5" r="1.5" fill="none" stroke="#e6e6e6" stroke-width="1"/></svg>
<svg class="a" style="left:19px;top:1147px" width="22" height="22" viewBox="0 0 22 22"><path d="M9.2 1.5h3.6l.5 2.6 2 .9 2.2-1.5 2.5 2.5-1.5 2.2.9 2 2.6.5v3.6l-2.6.5-.9 2 1.5 2.2-2.5 2.5-2.2-1.5-2 .9-.5 2.6H9.2l-.5-2.6-2-.9-2.2 1.5L2 17.7l1.5-2.2-.9-2-2.6-.5V9.4l2.6-.5.9-2L2 4.7 4.5 2.2l2.2 1.5 2-.9z" fill="none" stroke="#e6e6e6" stroke-width="1.2" transform="translate(0.5 -0.5) scale(0.95)"/><circle cx="11" cy="10.5" r="3.5" fill="none" stroke="#e6e6e6" stroke-width="1.2"/></svg>
<svg class="a" style="left:20px;top:1199px" width="20" height="20" viewBox="0 0 20 20"><path d="M6 4.5a7.5 7.5 0 1 0 8 0" fill="none" stroke="#e6e6e6" stroke-width="1.3"/><path d="M10 1v8" stroke="#e6e6e6" stroke-width="1.3"/></svg>
<!-- app list -->
<div class="t sm" style="left:78px;top:575px;font-size:14.5px">最近添加</div>
<svg class="a" style="left:77px;top:606px" width="29" height="24" preserveAspectRatio="none" viewBox="0 0 29 26"><rect x="8" y="0" width="21" height="26" rx="1" fill="#21a366"/><rect x="8" y="8.7" width="21" height="8.7" fill="#107c41"/><rect x="8" y="17.4" width="21" height="8.6" fill="#185c37"/><rect x="18" y="0" width="11" height="8.7" fill="#33c481"/><rect x="0" y="5" width="15" height="16" rx="1" fill="#107c41"/><path d="M4 9l7 8M11 9l-7 8" stroke="#fff" stroke-width="2"/></svg>
<div class="t sm" style="left:115px;top:611px">Excel</div>
<svg class="a" style="left:77px;top:644px" width="29" height="24" preserveAspectRatio="none" viewBox="0 0 29 26"><circle cx="16" cy="13" r="13" fill="#ed6c47"/><path d="M16 0a13 13 0 0 1 13 13H16z" fill="#ff8f6b"/><path d="M3 13a13 13 0 0 0 26 0z" fill="#d35230"/><rect x="0" y="5" width="15" height="16" rx="1" fill="#c43e1c"/><path d="M5 17V9h3.5a2.3 2.3 0 0 1 0 4.6H5" fill="none" stroke="#fff" stroke-width="1.9"/></svg>
<div class="t sm" style="left:115px;top:649px;letter-spacing:0.5px">PowerPoint</div>
<svg class="a" style="left:77px;top:683px" width="29" height="24" preserveAspectRatio="none" viewBox="0 0 29 26"><rect x="8" y="0" width="21" height="26" rx="1" fill="#41a5ee"/><rect x="8" y="8.7" width="21" height="8.7" fill="#2b7cd3"/><rect x="8" y="17.4" width="21" height="8.6" fill="#185abd"/><rect x="0" y="5" width="15" height="16" rx="1" fill="#185abd"/><path d="M2.5 9l2 8 3-6 3 6 2-8" fill="none" stroke="#fff" stroke-width="1.7"/></svg>
<div class="t sm" style="left:115px;top:687px;letter-spacing:0.8px">Word</div>
<div class="t sm" style="left:86px;top:728px;font-size:14px">B</div>
<svg class="a" style="left:78px;top:759px" width="27" height="24" viewBox="0 0 27 24"><rect x="0" y="0" width="27" height="24" rx="1" fill="#ffc510"/><path d="M12.5 10.5H26.5V11L13 23.5h-.5z" fill="#444"/><path d="M13 23.5L26.5 11v12.5z" fill="#e8a010"/></svg>
<div class="t sm" style="left:115px;top:764px">便笺</div>
<div class="t sm" style="left:86px;top:805px;font-size:14px">C</div>
<svg class="a" style="left:77px;top:835px" width="28" height="25" viewBox="0 0 28 25"><ellipse cx="14" cy="12.5" rx="12.3" ry="10.8" fill="none" stroke="#1a9bff" stroke-width="2.8"/></svg>
<div class="t sm" style="left:115px;top:841px;letter-spacing:0.35px">Cortana</div>
<div class="t sm" style="left:86px;top:882px;font-size:14px">D</div>
<svg class="a" style="left:78px;top:910px" width="26" height="27" viewBox="0 0 26 27"><path d="M13 26C6 19 1 15 1 10a12 12 0 0 1 24 0c0 5-5 9-12 16z" fill="#e0451f"/><path d="M13 26c-4-4-7-7-8-10h16c-1 3-4 6-8 10z" fill="#c0341a"/><ellipse cx="13" cy="10" rx="5" ry="4.5" fill="#fff"/></svg>
<div class="t sm" style="left:115px;top:917px">地图</div>
<svg class="a" style="left:77px;top:950px" width="29" height="24" preserveAspectRatio="none" viewBox="0 0 29 26"><path d="M2 6l24-5 1 5z" fill="#5ec0f8"/><rect x="1" y="6" width="26" height="19" fill="#1a7fd8"/><path d="M1 6h26v7H1z" fill="#2d9bf0" opacity=".6"/><path d="M10 11v10l8-5z" fill="#fff"/></svg>
<div class="t sm" style="left:115px;top:955px">电影和电视</div>
<div class="t sm" style="left:86px;top:996px;font-size:14px">E</div>
<svg class="a" style="left:77px;top:1027px" width="29" height="24" preserveAspectRatio="none" viewBox="0 0 29 26"><rect x="8" y="0" width="21" height="26" rx="1" fill="#21a366"/><rect x="8" y="8.7" width="21" height="8.7" fill="#107c41"/><rect x="8" y="17.4" width="21" height="8.6" fill="#185c37"/><rect x="18" y="0" width="11" height="8.7" fill="#33c481"/><rect x="0" y="5" width="15" height="16" rx="1" fill="#107c41"/><path d="M4 9l7 8M11 9l-7 8" stroke="#fff" stroke-width="2"/></svg>
<div class="t sm" style="left:115px;top:1024px">Excel</div>
<div class="t sm" style="left:115px;top:1041px;color:#3a9ef0;font-size:14px">最近添加</div>
<div class="t sm" style="left:86px;top:1073px;font-size:14px">F</div>
<svg class="a" style="left:77px;top:1102px" width="29" height="27" viewBox="0 0 29 27"><rect x="12" y="0" width="17" height="12" rx="1" fill="#1f7ed8"/><path d="M15 12v4l4-4z" fill="#1f7ed8"/><circle cx="9" cy="11" r="4.5" fill="#3ab0f0"/><path d="M1 26c0-6 3.5-9 8-9s8 3 8 9z" fill="#3ab0f0"/></svg>
<div class="t sm" style="left:115px;top:1109px">反馈中心</div>
<div class="t sm" style="left:86px;top:1149px;font-size:14px">G</div>
<svg class="a" style="left:77px;top:1179px" width="28" height="27" viewBox="0 0 28 27"><defs><linearGradient id="grv" x1="0" y1="0" x2="1" y2="1"><stop offset="0" stop-color="#f0603a"/><stop offset="1" stop-color="#8a4ad8"/></linearGradient></defs><circle cx="14" cy="13.5" r="12" fill="#3a3a3a" stroke="url(#grv)" stroke-width="2.4"/><circle cx="14" cy="13.5" r="5.5" fill="#e8e8e8"/><circle cx="14" cy="13.5" r="2" fill="#3a3a3a"/></svg>
<div class="t sm" style="left:115px;top:1185px">Groove 音乐</div>
<div class="a" style="left:0;top:1225px;width:777px;height:8px;overflow:hidden"><div class="t sm" style="left:85px;top:2px;font-size:14px">H</div></div>
<!-- tiles -->
<div class="t sm" style="left:389px;top:576px;font-size:14.5px">高效工作</div>
<div class="tile" style="left:389px;top:605px;width:119px;height:106px"></div>
<div class="tile" style="left:514px;top:605px;width:119px;height:106px"></div>
<div class="tile" style="left:639px;top:605px;width:119px;height:106px;background:#393939"></div>
<div class="tile" style="left:389px;top:716px;width:119px;height:105px"></div>
<div class="tile" style="left:514px;top:716px;width:119px;height:105px"></div>
<div class="t sm" style="left:389px;top:836px;font-size:14.5px">浏览</div>
<div class="tile" style="left:389px;top:865px;width:119px;height:105px"></div>
<!-- office logo -->
<svg class="a" style="left:431px;top:639px" width="36" height="39" viewBox="0 0 36 39"><defs><linearGradient id="off" x1="0" y1="0" x2="1" y2="1"><stop offset="0" stop-color="#ff6a3a"/><stop offset="0.5" stop-color="#e84a1a"/><stop offset="1" stop-color="#c0300a"/></linearGradient></defs><path d="M2 8L22 1l12 4v29l-12 4L2 31l20 3V6L9 10v18L2 31z" fill="url(#off)"/><path d="M2 31l7-3V10l4-1.5V29z" fill="#e04070" opacity=".6"/></svg>
<div class="t sm" style="left:398px;top:690px;font-size:14.5px">Office</div>
<!-- group mini icons -->
<svg class="a" style="left:522px;top:613px" width="110" height="64" viewBox="0 0 110 64">
<g transform="translate(2 2)"><rect x="6" y="0" width="13" height="16" rx="1" fill="#28a8ea"/><rect x="0" y="3" width="10" height="10" rx="1" fill="#0a64b8"/><circle cx="5" cy="8" r="2.5" fill="none" stroke="#fff" stroke-width="1.3"/></g>
<g transform="translate(42 2)"><rect x="6" y="0" width="13" height="16" rx="1" fill="#41a5ee"/><rect x="6" y="8" width="13" height="8" fill="#185abd"/><rect x="0" y="3" width="10" height="10" rx="1" fill="#185abd"/><path d="M1.5 6l1.5 5 2-3.5 2 3.5 1.5-5" fill="none" stroke="#fff" stroke-width="1"/></g>
<g transform="translate(82 2)"><rect x="6" y="0" width="13" height="16" rx="1" fill="#21a366"/><rect x="6" y="8" width="13" height="8" fill="#185c37"/><rect x="0" y="3" width="10" height="10" rx="1" fill="#107c41"/><path d="M2.5 5.5l5 5M7.5 5.5l-5 5" stroke="#fff" stroke-width="1.2"/></g>
<g transform="translate(1 39)"><path d="M4 13a3.5 3.5 0 0 1 0-7 5 5 0 0 1 9-1 3.5 3.5 0 0 1 6 3.5 2.5 2.5 0 0 1 0 4.5z" fill="#1c8ce0"/></g>
<g transform="translate(41 36)"><circle cx="11" cy="9" r="9" fill="#ed6c47"/><rect x="0" y="3" width="10" height="11" rx="1" fill="#c43e1c"/><path d="M3 12V5.5h2.5a1.7 1.7 0 0 1 0 3.4H3" fill="none" stroke="#fff" stroke-width="1.3"/></g>
</svg>
<div class="a" style="left:594px;top:640px;width:39px;height:36px;background:#0078d4"></div>
<svg class="a" style="left:603.5px;top:648px" width="22" height="20" viewBox="0 0 22 20"><rect x="0.5" y="1" width="21" height="18.5" rx="8.5" fill="#fff"/><circle cx="5" cy="5" r="4.5" fill="#fff"/><circle cx="17" cy="15.5" r="4.5" fill="#fff"/><path d="M15 6.8c-.6-1.4-2-2.2-4-2.2-2.3 0-3.8 1.1-3.8 2.7 0 3.3 7.8 1.9 7.8 5.5 0 1.6-1.6 2.8-3.9 2.8-2.1 0-3.6-.9-4.2-2.4" fill="none" stroke="#0078d4" stroke-width="2.1"/></svg>
<!-- mail tile -->
<div class="t sm" style="left:647px;top:628.5px;font-size:14.4px">在一处查看所有</div>
<div class="t sm" style="left:684px;top:645px;font-size:14px">邮件</div>
<div class="t sm" style="left:648px;top:690px;font-size:14px">邮件</div>
<svg class="a" style="left:729px;top:689px" width="21" height="17" viewBox="0 0 30 25"><path d="M0 8L15 0l15 8v16H0z" fill="#1468c4"/><path d="M0 8h30v16H0z" fill="url(#mlb)"/><path d="M3 9h24l-12 6.5z" fill="#f2f6fa"/><path d="M0 24l15-9 15 9z" fill="#2aa0ea" opacity=".7"/></svg>
<!-- edge -->
<svg class="a" style="left:429px;top:751px" width="39" height="35" viewBox="0 0 30 27"><defs><linearGradient id="e1" x1="0" y1="0" x2="1" y2="0"><stop offset="0" stop-color="#1a90e8"/><stop offset="0.5" stop-color="#2ab8e0"/><stop offset="0.75" stop-color="#40d090"/><stop offset="1" stop-color="#60e060"/></linearGradient><linearGradient id="e2" x1="0" y1="0" x2="1" y2="1"><stop offset="0" stop-color="#1080e0"/><stop offset="1" stop-color="#0a68c8"/></linearGradient></defs><ellipse cx="15" cy="13.5" rx="14.8" ry="13.3" fill="url(#e1)"/><path d="M0.2 13.5A14.8 13.3 0 0 0 15 26.8C21 26.8 26 24 29 19.5C24 20.5 15 20 12.3 15.5C10.8 13 11 10.5 14 8.8C9 7.5 0.8 8 0.2 13.5z" fill="url(#e2)"/><path d="M9 14C9.5 20 13 25.5 16 26.8C21 26.8 26 24 29 19.5C24 20.5 15 20 12.3 15.5C11.3 13.8 11 12 11.5 10.8C10 11.5 9 12.5 9 14z" fill="#1a50a8"/><path d="M12 13.8C11.6 11.2 13.6 9.6 16 9.8C18.2 10 19.3 12 18.6 14.2C18.4 16 21 17.3 24 17.3C26 17.3 28 17 30 16.3L30 19.2C28 19.8 26.2 20.1 24.5 20.1C19 20 12.6 17.8 12 13.8z" fill="#353535"/></svg>
<div class="t sm" style="left:398px;top:801px;font-size:14.5px">Microsoft Edge</div>
<!-- photos -->
<svg class="a" style="left:556px;top:753px" width="36" height="32" viewBox="0 0 36 32"><defs><linearGradient id="ph" x1="0" y1="0" x2="0" y2="1"><stop offset="0" stop-color="#3cb8f8"/><stop offset="1" stop-color="#1878d8"/></linearGradient></defs><rect x="0" y="0" width="36" height="31" rx="1" fill="url(#ph)"/><path d="M0 31l12-15 9 8 6-4 9 11z" fill="#1a4a9a"/><path d="M12 16l9 8 6-4 9 11H20z" fill="#3a70d0" opacity=".7"/><circle cx="25" cy="7" r="3" fill="#fff"/></svg>
<div class="t sm" style="left:523px;top:801px;font-size:14px">照片</div>
<!-- store -->
<svg class="a" style="left:429px;top:899px" width="39" height="37" viewBox="0 0 39 37"><path d="M12 11V5.5A3.5 3.5 0 0 1 15.5 2h8A3.5 3.5 0 0 1 27 5.5V11" fill="none" stroke="#e6e6e6" stroke-width="2.6"/><rect x="0.5" y="10" width="38" height="26.5" rx="1.2" fill="#f0f0f0"/><rect x="12.5" y="17" width="6.5" height="6" rx=".8" fill="#e0552a"/><rect x="20" y="17" width="6.5" height="6" rx=".8" fill="#7cbb1a"/><rect x="12.5" y="24" width="6.5" height="6" rx=".8" fill="#1ea7f0"/><rect x="20" y="24" width="6.5" height="6" rx=".8" fill="#f8c000"/></svg>
<div class="t sm" style="left:398px;top:950px;font-size:14.5px">Microsoft Store</div>


<!-- TASKBAR -->
<div id="tb" class="a"></div>
<div class="a" style="left:0;top:1233px;width:57px;height:43px;background:#33464f"></div>
<svg class="a" style="left:19px;top:1245px" width="20" height="20" viewBox="0 0 20 20"><path d="M0 2.8l8-1.1v7.7H0zM9 1.5L20 0v9.4H9zM0 10.4h8v7.8L0 17.1zM9 10.4h11V20L9 18.4z" fill="#fff"/></svg>
<div class="a" style="left:57px;top:1233px;width:413px;height:43px;background:#fff;border:2px solid #0a78d8"></div>
<svg class="a" style="left:72px;top:1245px" width="20" height="20" viewBox="0 0 20 20"><circle cx="12" cy="7.5" r="5.5" fill="none" stroke="#333" stroke-width="1.2"/><path d="M8 11.5L1.5 18" stroke="#333" stroke-width="1.3"/></svg>
<div class="a" style="left:105px;top:1244px;width:1px;height:22px;background:#000"></div>
<div class="t" style="left:107.5px;top:1245.5px;font-size:17.6px;color:#333;-webkit-text-stroke:0">在此键入进行搜索</div>
<svg class="a" style="left:489px;top:1245px" width="21" height="20" viewBox="0 0 21 20"><circle cx="10.5" cy="10" r="8.3" fill="none" stroke="#e8e8e8" stroke-width="2"/></svg>
<svg class="a" style="left:546px;top:1245px" width="22" height="19" viewBox="0 0 22 19"><path d="M1 1.5h3M1 17.5h3M14 1.5h-3M14 17.5h-3M2 1.5v16M13 1.5v16M2 5h11M2 14h11" fill="none" stroke="#ddd" stroke-width="1.3"/><path d="M18.5 0v19" stroke="#ddd" stroke-width="1.3"/><rect x="16.5" y="5" width="4" height="4" fill="#fff"/></svg>
<svg class="a" style="left:603px;top:1241.3px" width="30" height="27" viewBox="0 0 30 27"><ellipse cx="15" cy="13.5" rx="14.8" ry="13.3" fill="url(#e1)"/><path d="M0.2 13.5A14.8 13.3 0 0 0 15 26.8C21 26.8 26 24 29 19.5C24 20.5 15 20 12.3 15.5C10.8 13 11 10.5 14 8.8C9 7.5 0.8 8 0.2 13.5z" fill="url(#e2)"/><path d="M9 14C9.5 20 13 25.5 16 26.8C21 26.8 26 24 29 19.5C24 20.5 15 20 12.3 15.5C11.3 13.8 11 12 11.5 10.8C10 11.5 9 12.5 9 14z" fill="#1a50a8"/><path d="M12 13.8C11.6 11.2 13.6 9.6 16 9.8C18.2 10 19.3 12 18.6 14.2C18.4 16 21 17.3 24 17.3C26 17.3 28 17 30 16.3L30 19.2C28 19.8 26.2 20.1 24.5 20.1C19 20 12.6 17.8 12 13.8z" fill="#021420"/></svg>
<svg class="a" style="left:662px;top:1242px" width="29" height="26" viewBox="0 0 29 26"><path d="M8.5 7V3.5A2.5 2.5 0 0 1 11 1h7a2.5 2.5 0 0 1 2.5 2.5V7" fill="none" stroke="#e8e8e8" stroke-width="2"/><rect x="0.5" y="6.5" width="28" height="19" rx="1" fill="#f0f0f0"/><rect x="9" y="11.5" width="5" height="4.3" rx=".6" fill="#e0552a"/><rect x="15" y="11.5" width="5" height="4.3" rx=".6" fill="#7cbb1a"/><rect x="9" y="16.8" width="5" height="4.3" rx=".6" fill="#1ea7f0"/><rect x="15" y="16.8" width="5" height="4.3" rx=".6" fill="#f8c000"/></svg>
<svg class="a" style="left:721px;top:1242px" width="30" height="25" viewBox="0 0 30 25"><defs><linearGradient id="mlb" x1="0" y1="0" x2="1" y2="1"><stop offset="0" stop-color="#3ab6f2"/><stop offset="1" stop-color="#1a88e0"/></linearGradient></defs><path d="M0 8L15 0l15 8v16H0z" fill="#1468c4"/><path d="M0 8h30v16H0z" fill="url(#mlb)"/><path d="M3 9h24l-12 6.5z" fill="#f2f6fa"/><path d="M0 24l15-9 15 9z" fill="#2aa0ea" opacity=".7"/></svg>
<svg class="a" style="left:780px;top:1243px" width="28" height="22" viewBox="0 0 28 22"><path d="M1 2a1 1 0 0 1 1-1h8l2 2h-11z" fill="#e8a010"/><rect x="1" y="3" width="26" height="17" rx="1" fill="#f9d06a"/><rect x="1" y="3" width="26" height="2.5" fill="#f0b83a"/><path d="M5 21v-9a1 1 0 0 1 1-1h15a1 1 0 0 1 1 1v9h-4v-5h-9v5z" fill="#3a86d8"/><rect x="9.5" y="16" width="8" height="3" fill="#f9d06a"/></svg>
<div class="a" style="left:770px;top:1273.5px;width:48px;height:2.5px;background:#76b9ed"></div>
<!-- tray -->
<svg class="a" style="left:1423px;top:1244px" width="27" height="22" viewBox="0 0 27 22"><defs><linearGradient id="sun" x1="0" y1="0" x2="0" y2="1"><stop offset="0" stop-color="#ffd050"/><stop offset="1" stop-color="#f0a020"/></linearGradient><linearGradient id="cld" x1="0" y1="0" x2="1" y2="1"><stop offset="0" stop-color="#c8e4f8"/><stop offset="1" stop-color="#e8f4fc"/></linearGradient></defs><circle cx="11.5" cy="9.5" r="8.5" fill="url(#sun)"/><path d="M5.5 20.5a4.5 4.5 0 0 1-.8-8.9 6.5 6.5 0 0 1 12.3-.6 4.8 4.8 0 0 1 5.5 4.7 4.5 4.5 0 0 1 0 4.8z" fill="url(#cld)"/></svg>
<div class="t" style="left:1460px;top:1246px;font-size:16.5px;color:#e6e6e6">23°C</div><div class="t" style="left:1507.5px;top:1247px;font-size:15px;color:#e6e6e6;letter-spacing:1.7px">大部多云</div>
<svg class="a" style="left:1595px;top:1248px" width="16" height="10" viewBox="0 0 16 10"><path d="M1.5 8.5L8 2l6.5 6.5" fill="none" stroke="#e6e6e6" stroke-width="1.3"/></svg>
<svg class="a" style="left:1621px;top:1248px" width="22" height="14" viewBox="0 0 22 14"><rect x="5.5" y="2.5" width="15" height="9" fill="none" stroke="#e6e6e6" stroke-width="1.2"/><rect x="7" y="4" width="8" height="6" fill="#e6e6e6"/><path d="M1 5h4M1 9h4M3 3v2M3 9v2" stroke="#e6e6e6" stroke-width="1.1"/></svg>
<svg class="a" style="left:1650px;top:1247px" width="22" height="17" viewBox="0 0 22 17"><rect x="6.5" y="1.5" width="14" height="10" fill="none" stroke="#e6e6e6" stroke-width="1.2"/><path d="M13.5 11.5v3M10 15h7" stroke="#e6e6e6" stroke-width="1.2"/><rect x="1.5" y="4.5" width="5" height="6" fill="none" stroke="#e6e6e6" stroke-width="1.1"/><path d="M4 10.5v5" stroke="#e6e6e6" stroke-width="1.1"/></svg>
<svg class="a" style="left:1679px;top:1247px" width="21" height="17" viewBox="0 0 21 17"><path d="M1.5 6h3l4-4v13l-4-4h-3z" fill="none" stroke="#e6e6e6" stroke-width="1.2"/><path d="M11 6a3 3 0 0 1 0 5M13.5 4a6 6 0 0 1 0 9M16 2a9 9 0 0 1 0 13" fill="none" stroke="#e6e6e6" stroke-width="1.2"/></svg>
<svg class="a" style="left:1712px;top:1245px" width="23" height="23" viewBox="0 0 23 23"><path d="M8.5 20L19 6.5c1-1.3 1.2-2.8.3-3.5-.9-.7-2.3 0-3.3 1.3L6.5 17.5z" fill="none" stroke="#e6e6e6" stroke-width="1.2"/><path d="M7.5 19c-2 2-5 2.5-5.5.8-.5-1.8 2.5-4.3 5.5-4.8M18.5 12c2.2-.2 3.5.5 3.2 1.3-.3.8-1.5 1.2-3 1.3" fill="none" stroke="#e6e6e6" stroke-width="1.2"/></svg>
<div class="t" style="left:1747.5px;top:1247px;font-size:16px;color:#f0f0f0;font-weight:bold">中</div>
<div class="t" style="left:1794px;top:1238px;font-size:14.5px;color:#f0f0f0">16:46</div>
<div class="t" style="left:1777px;top:1258px;font-size:14.5px;color:#f0f0f0;letter-spacing:0.7px">2021/4/15</div>
<svg class="a" style="left:1869px;top:1246px" width="22" height="20" viewBox="0 0 22 20"><path d="M1.8 1.2h18.5v13.5h-6.3l-3.3 3.3-3.3-3.3H1.8z" fill="none" stroke="#e6e6e6" stroke-width="1.2"/></svg>
<div class="a" style="left:1914px;top:1233px;width:1px;height:43px;background:#3a4a55"></div>
<!-- watermark -->
<div class="t" style="right:6.5px;top:1194px;font-size:14.5px;color:#fff;letter-spacing:0.3px">Windows 10 专业版</div>
<div class="t" style="right:6.5px;top:1215px;font-size:14.5px;color:#fff;letter-spacing:0.2px">评估副本。 Build 21354.co_release.210402-1630</div>


</body></html>
